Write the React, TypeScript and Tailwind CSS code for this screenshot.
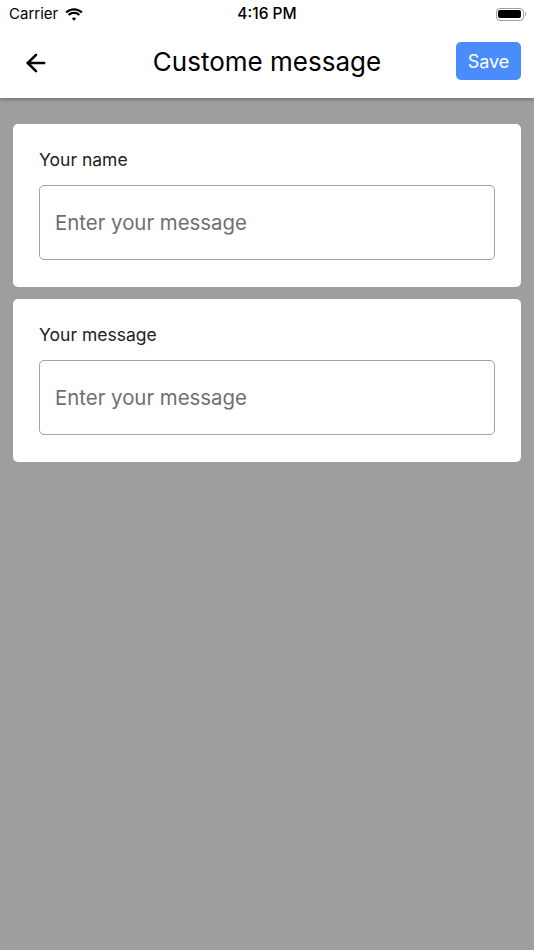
import React from 'react';
import { ArrowLeft } from 'lucide-react';

function StatusBar() {
  return (
    <div className="h-[28px] flex items-center justify-between px-[9px] relative">
      <div className="flex items-center gap-[6px] text-[15px] text-black">
        <span>Carrier</span>
        <svg width="20" height="15" viewBox="0 0 19 14" fill="black">
          <path d="M9.5 3.2c2.6 0 5 1 6.8 2.7l1.4-1.5C15.5 2.3 12.6 1.1 9.5 1.1S3.5 2.3 1.3 4.4l1.4 1.5C4.5 4.2 6.9 3.2 9.5 3.2z" />
          <path d="M9.5 6.6c1.7 0 3.2.6 4.4 1.7l1.4-1.5C13.8 5.3 11.7 4.5 9.5 4.5S5.2 5.3 3.7 6.8l1.4 1.5c1.2-1.1 2.7-1.7 4.4-1.7z" />
          <path d="M9.5 9.9c.8 0 1.5.3 2 .8L9.5 13l-2-2.3c.5-.5 1.2-.8 2-.8z" />
        </svg>
      </div>
      <span className="absolute left-1/2 -translate-x-1/2 text-[15.5px] font-medium text-black">4:16 PM</span>
      <div className="flex items-center mr-[-1px]">
        <div className="w-[28px] h-[13px] rounded-[4px] border border-[#a0a0a0] p-[1.5px]">
          <div className="w-full h-full bg-black rounded-[2px]" />
        </div>
        <div className="w-[1.5px] h-[4px] bg-[#a0a0a0] rounded-r-sm ml-[1px]" />
      </div>
    </div>
  );
}

function FieldCard({ label }: { label: string }) {
  return (
    <div className="bg-white rounded-[5px] px-[26px] pt-[26px] pb-[27px]">
      <div className="text-[17.5px] leading-[20px] text-[#222]">{label}</div>
      <input
        placeholder="Enter your message"
        className="mt-[15px] w-full h-[75px] border border-[#a3a3a3] rounded-[5px] px-[15px] text-[20.4px] text-[#222] placeholder:text-[#6f6f6f] outline-none"
      />
    </div>
  );
}

export default function App() {
  return (
    <div className="min-h-[950px] bg-[#9e9e9e] flex flex-col" style={{ fontFamily: 'Inter, "Noto Sans", sans-serif' }}>
      {/* Header */}
      <div className="bg-white shadow-[0_2px_3px_rgba(0,0,0,0.25)] relative z-10">
        <StatusBar />
        <div className="h-[70px] flex items-center justify-between pl-[22px] pr-[13px] relative">
          <ArrowLeft className="w-[28px] h-[28px] text-black" strokeWidth={2.2} />
          <h1 className="absolute left-1/2 top-1/2 -translate-x-1/2 -translate-y-[calc(50%+2px)] text-[26px] text-black whitespace-nowrap">Custome message</h1>
          <button className="bg-[#4a8cfc] text-white text-[18px] rounded-[5px] w-[65px] h-[38px] mt-[-4px]">Save</button>
        </div>
      </div>

      {/* Fields */}
      <div className="px-[13px] pt-[26px] flex flex-col gap-[12px]">
        <FieldCard label="Your name" />
        <FieldCard label="Your message" />
      </div>
    </div>
  );
}
